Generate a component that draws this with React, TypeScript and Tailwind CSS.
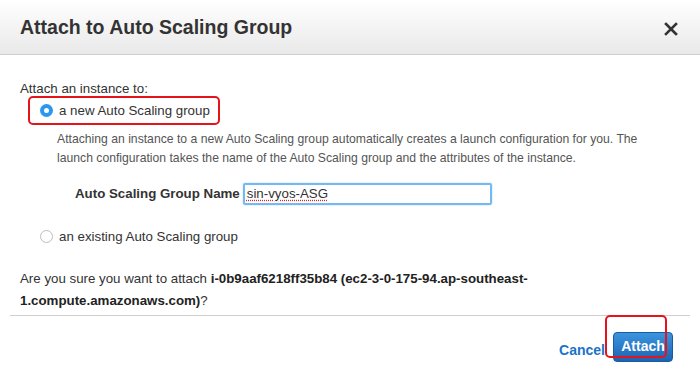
export default function App() {
  return (
    <div className="w-[700px] h-[375px] bg-white overflow-hidden font-['Liberation_Sans',Arial,sans-serif] text-[#333]">
      {/* header */}
      <div className="h-[55px] flex items-center justify-between px-5 bg-gradient-to-b from-white to-[#e9e9e9] border-b border-[#cfcfcf]">
        <h1 className="text-[19.5px] font-bold text-[#333] pt-[2px]">Attach to Auto Scaling Group</h1>
        <svg width="14" height="14" viewBox="0 0 14 14" className="mr-[2px] mt-[3px]">
          <path d="M2 2L12 12M12 2L2 12" stroke="#333" strokeWidth="2.6" strokeLinecap="square" />
        </svg>
      </div>

      {/* body */}
      <div className="px-5 pt-[24px] text-[13.3px]">
        <div className="leading-[20px]">Attach an instance to:</div>
        <div className="ml-2 mt-[-3px] inline-flex items-center h-[29px] w-[192px] border-2 border-[#e5141b] rounded-[5px] pl-[10px]">
          <span className="w-[13px] h-[13px] rounded-full bg-[#2b97f0] flex items-center justify-center">
            <span className="w-[5px] h-[5px] rounded-full bg-white" />
          </span>
          <span className="ml-[6px]">a new Auto Scaling group</span>
        </div>
        <div className="ml-[37px] mt-[5px] text-[12.2px] leading-[19px] text-[#555]">
          <p>Attaching an instance to a new Auto Scaling group automatically creates a launch configuration for you. The</p>
          <p>launch configuration takes the name of the Auto Scaling group and the attributes of the instance.</p>
        </div>
        <div className="flex items-center mt-[15px] ml-[55px]">
          <span className="font-bold">Auto Scaling Group Name</span>
          <div className="ml-[3px] w-[249px] h-[22px] border-2 border-[#75b9f0] rounded-[2px] flex items-center px-[2px] shadow-[0_0_2px_#a8d4f8]">
            <span className="underline decoration-dotted decoration-[#e02020] underline-offset-2">sin-vyos-ASG</span>
          </div>
        </div>
        <div className="flex items-center mt-[22px] ml-[20px]">
          <span className="w-[13px] h-[13px] rounded-full border border-[#bdbdbd] bg-white" />
          <span className="ml-[6px]">an existing Auto Scaling group</span>
        </div>
        <div className="mt-[21px] leading-[22px] text-[#333]">
          <p>
            Are you sure you want to attach <b className="text-[#222]">i-0b9aaf6218ff35b84 (ec2-3-0-175-94.ap-southeast-</b>
          </p>
          <p>
            <b className="text-[#222]">1.compute.amazonaws.com)</b>?
          </p>
        </div>
      </div>

      {/* divider */}
      <div className="mx-[10px] mt-[3px] border-t border-[#cfcfcf]" />

      {/* footer */}
      <div className="relative flex items-center justify-end gap-[8px] pr-[27px] pt-[16px]">
        <button className="text-[14px] font-bold text-[#1a73c8] mt-[8px]">Cancel</button>
        <button className="w-[60px] h-[30px] rounded-[4px] bg-gradient-to-b from-[#3a94de] to-[#1d64b3] border border-[#1a5aa0] text-white font-bold text-[14px]">
          Attach
        </button>
        <div className="absolute left-[605px] top-[-1px] w-[62px] h-[43px] border-2 border-[#e5141b] rounded-[5px]" />
      </div>
    </div>
  );
}
